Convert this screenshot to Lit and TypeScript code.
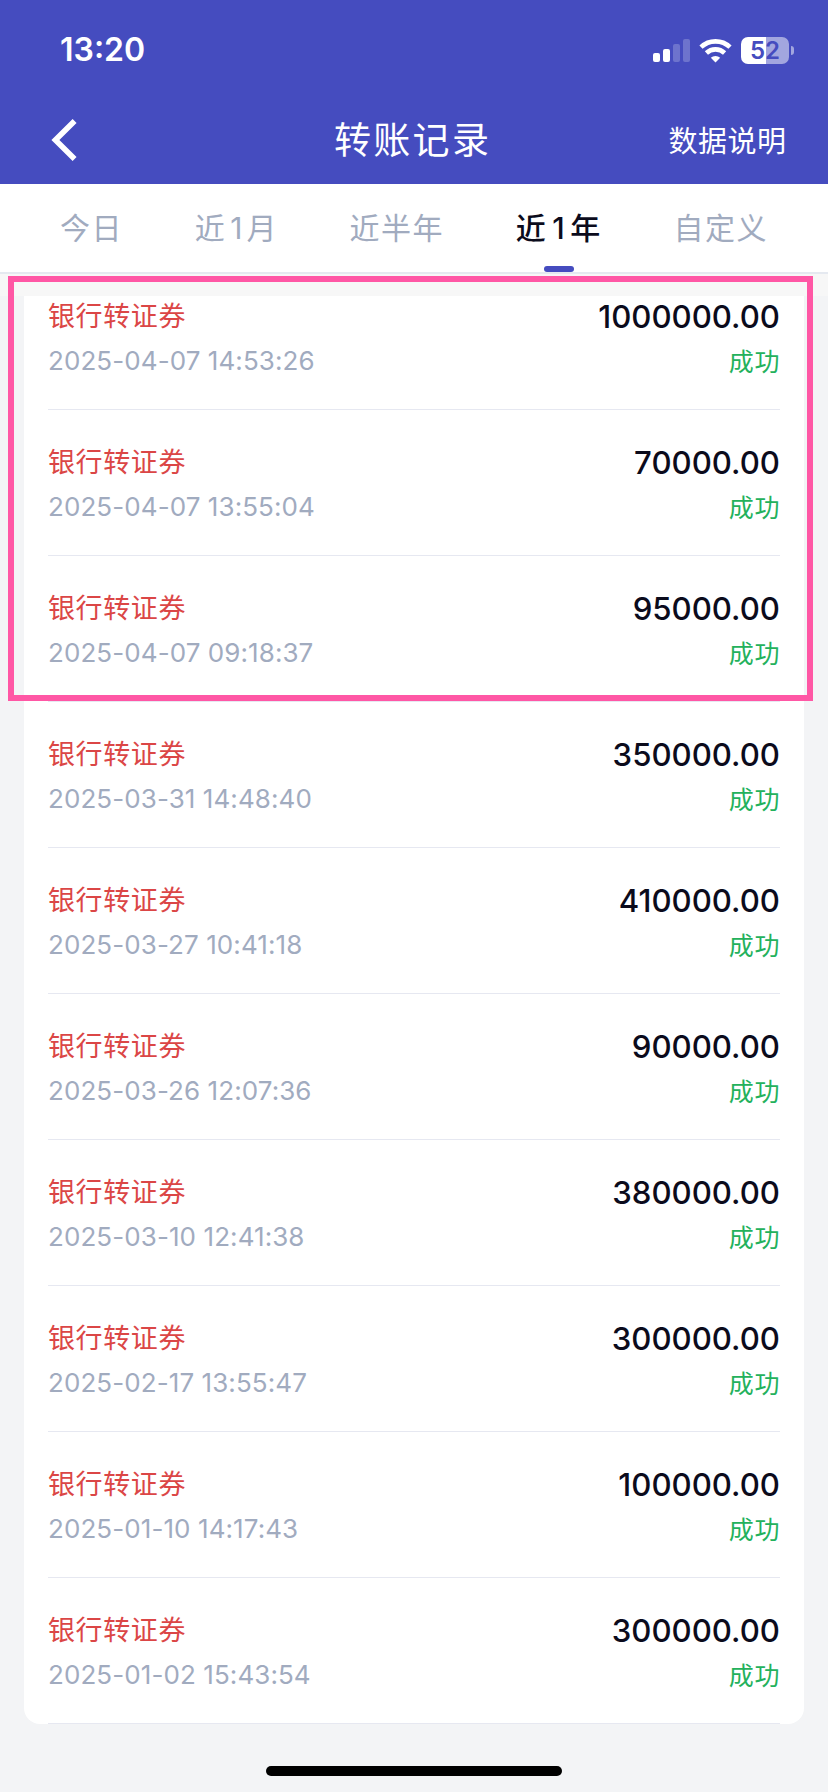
import { LitElement, html, css } from "lit";
import { customElement, property } from "lit/decorators.js";

interface Transfer {
  time: string;
  amount: string;
}

const TRANSFERS: Transfer[] = [
  { time: "2025-04-07 14:53:26", amount: "1000000.00" },
  { time: "2025-04-07 13:55:04", amount: "70000.00" },
  { time: "2025-04-07 09:18:37", amount: "95000.00" },
  { time: "2025-03-31 14:48:40", amount: "350000.00" },
  { time: "2025-03-27 10:41:18", amount: "410000.00" },
  { time: "2025-03-26 12:07:36", amount: "90000.00" },
  { time: "2025-03-10 12:41:38", amount: "380000.00" },
  { time: "2025-02-17 13:55:47", amount: "300000.00" },
  { time: "2025-01-10 14:17:43", amount: "100000.00" },
  { time: "2025-01-02 15:43:54", amount: "300000.00" },
];

@customElement("status-bar")
class StatusBar extends LitElement {
  static styles = css`
    :host {
      display: flex;
      justify-content: space-between;
      align-items: center;
      height: 100px;
      padding: 0 34px 0 60px;
      color: #fff;
      font-family: Inter, sans-serif;
    }
    .time {
      font-size: 32px;
      font-weight: 600;
      line-height: 40px;
    }
    .icons {
      display: flex;
      align-items: center;
    }
    .signal {
      width: 37px;
      height: 23px;
    }
    .wifi {
      width: 33px;
      height: 25px;
      margin-left: 9px;
    }
    .battery {
      display: grid;
      place-items: center;
      width: 48px;
      height: 27px;
      margin-left: 9px;
      border-radius: 7px;
      background: linear-gradient(90deg, #fff 52%, #a2a6df 52%);
      color: #454cbf;
      font-size: 24px;
      font-weight: 600;
      line-height: 27px;
    }
    .nub {
      width: 3px;
      height: 9px;
      margin-left: 2px;
      border-radius: 0 4px 4px 0;
      background: #a2a6df;
    }
  `;

  render() {
    return html`
      <span class="time">13:20</span>
      <div class="icons">
        <svg class="signal" viewBox="0 0 37 23" fill="#fff">
          <rect x="0" y="14" width="7" height="9" rx="2" />
          <rect x="10" y="10" width="7" height="13" rx="2" />
          <rect x="20" y="5" width="7" height="18" rx="2" opacity="0.22" />
          <rect x="30" y="0" width="7" height="23" rx="2" opacity="0.22" />
        </svg>
        <svg class="wifi" viewBox="0 0 33 25">
          <g fill="none" stroke="#fff" stroke-width="4.6">
            <path d="M2 9.2 A21 21 0 0 1 31 9.2" />
            <path d="M7.4 15 A13.2 13.2 0 0 1 25.6 15" />
          </g>
          <path d="M16.5 24.4 L11.8 19.8 A6.8 6.8 0 0 1 21.2 19.8 Z" fill="#fff" />
        </svg>
        <span class="battery">52</span>
        <span class="nub"></span>
      </div>
    `;
  }
}

@customElement("transfer-row")
class TransferRow extends LitElement {
  @property({ attribute: false }) item!: Transfer;

  static styles = css`
    :host {
      display: grid;
      grid-template-columns: 1fr auto;
      grid-template-rows: 45px 44px;
      align-items: center;
      box-sizing: border-box;
      height: 146px;
      padding-top: 30px;
      border-bottom: 1px solid #e6e8f1;
      line-height: 44px;
      white-space: nowrap;
    }
    .kind {
      color: #db4646;
      font-size: 27px;
      letter-spacing: 0.6px;
    }
    .amount {
      padding-top: 1px;
      color: #0b0b1c;
      font-size: 31.2px;
      font-weight: 500;
      text-align: right;
    }
    .time {
      color: #a1abbf;
      font-size: 26px;
      letter-spacing: 0.08px;
    }
    .state {
      padding-top: 1px;
      color: #23b15c;
      font-size: 25px;
      letter-spacing: 0.6px;
      text-align: right;
    }
  `;

  render() {
    return html`
      <span class="kind">银行转证券</span>
      <span class="amount">${this.item.amount}</span>
      <span class="time">${this.item.time}</span>
      <span class="state">成功</span>
    `;
  }
}

@customElement("app-root")
class AppRoot extends LitElement {
  static styles = css`
    :host {
      display: flex;
      flex-direction: column;
      position: relative;
      height: 1792px;
      overflow: hidden;
      background: #f3f4f6;
      font-family: Inter, "Noto Sans CJK SC", sans-serif;
    }
    .header {
      height: 184px;
      background: #454cbf;
      color: #fff;
    }
    .nav {
      display: grid;
      grid-template-columns: 283px auto 1fr;
      align-items: center;
      height: 82px;
      padding: 0 41.5px 0 51px;
    }
    .back {
      width: 26px;
      height: 42px;
      margin-bottom: 2px;
    }
    .title {
      font-size: 37px;
      letter-spacing: 2.3px;
      line-height: 50px;
    }
    .info {
      justify-self: end;
      padding-top: 1px;
      font-size: 29px;
      letter-spacing: 0.5px;
      line-height: 50px;
    }
    .tabs {
      display: flex;
      justify-content: space-between;
      height: 88px;
      padding: 0 60px;
      border-bottom: 2px solid #e5e9f0;
      background: #fff;
      color: #a1abbf;
      font-size: 30px;
      letter-spacing: 1.5px;
      line-height: 88px;
    }
    .tab {
      display: flex;
      flex-direction: column;
      align-items: center;
      height: 88px;
    }
    .label {
      height: 82px;
    }
    .digit {
      margin: 0 2.5px 0 4px;
    }
    .active {
      color: #0b0b1c;
      font-weight: 500;
    }
    .active .digit {
      margin: 0 4px 0 5px;
    }
    .marker {
      width: 30px;
      height: 6px;
      border-radius: 3px;
      background: #454cbf;
    }
    .strip {
      height: 22px;
      background: #f7f7f7;
    }
    .viewport {
      height: 1428px;
      padding: 0 24px;
      overflow: hidden;
    }
    .card {
      margin-top: -32px;
      padding: 0 24px;
      border-radius: 16px;
      background: #fff;
    }
    .home {
      width: 296px;
      height: 10px;
      margin: 42px auto 0;
      border-radius: 5px;
      background: #000;
    }
    .highlight {
      position: absolute;
      left: 8px;
      top: 276px;
      box-sizing: border-box;
      width: 805px;
      height: 424.6px;
      border: 6px solid #ff57a5;
    }
  `;

  render() {
    return html`
      <div class="header">
        <status-bar></status-bar>
        <div class="nav">
          <svg class="back" viewBox="0 0 26 42">
            <path d="M23.6 2 L4.4 21 L23.6 40" fill="none" stroke="#fff" stroke-width="5.6" />
          </svg>
          <span class="title">转账记录</span>
          <span class="info">数据说明</span>
        </div>
      </div>
      <div class="tabs">
        <div class="tab"><span class="label">今日</span></div>
        <div class="tab"><span class="label">近<span class="digit">1</span>月</span></div>
        <div class="tab"><span class="label">近半年</span></div>
        <div class="tab active">
          <span class="label">近<span class="digit">1</span>年</span>
          <span class="marker"></span>
        </div>
        <div class="tab"><span class="label">自定义</span></div>
      </div>
      <div class="strip"></div>
      <div class="viewport">
        <div class="card">
          ${TRANSFERS.map((item) => html`<transfer-row .item=${item}></transfer-row>`)}
        </div>
      </div>
      <div class="home"></div>
      <div class="highlight"></div>
    `;
  }
}
